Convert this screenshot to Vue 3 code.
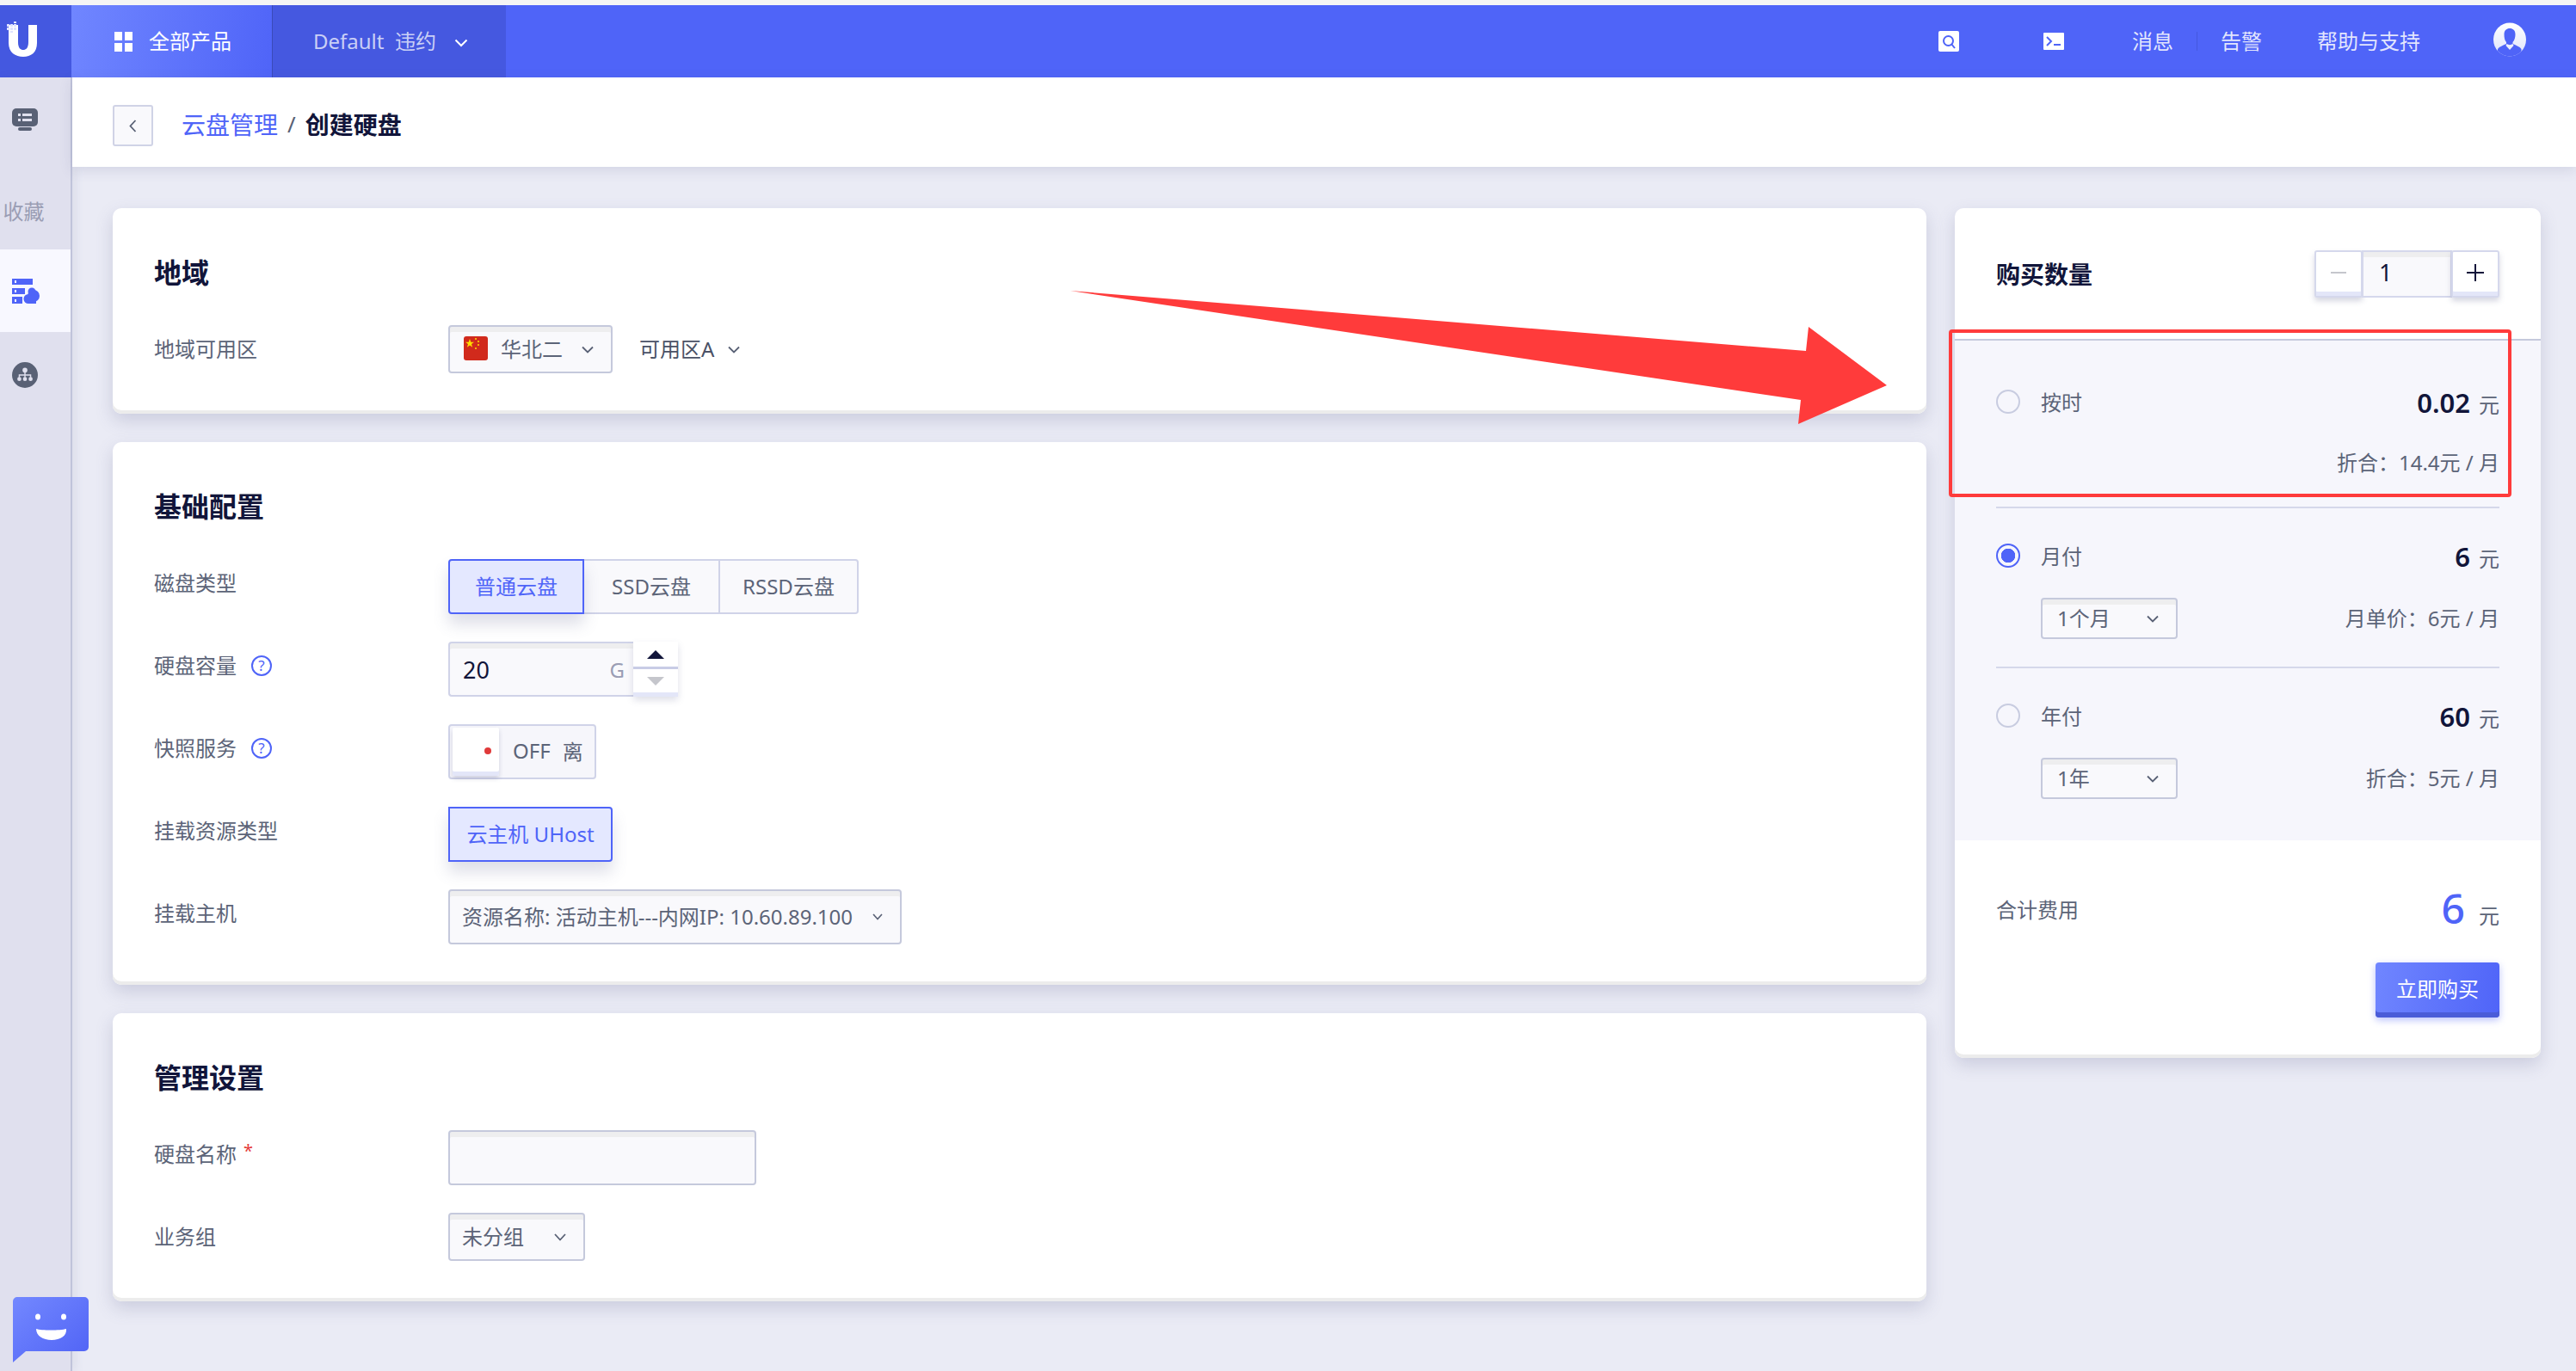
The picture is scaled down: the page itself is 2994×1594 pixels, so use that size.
<script setup>
const diskTypes = [
  { name: '普通云盘', w: 158, active: true },
  { name: 'SSD云盘', w: 158 },
  { name: 'RSSD云盘', w: 161 }
]
const rightNav = ['消息', '告警', '帮助与支持']
</script>

<template>
  <div class="page">
    <header class="topbar">
      <div class="logo">
        <svg width="83" height="84" viewBox="0 0 83 84">
          <path d="M10 29h11v20c0 7 3 9 6 9s6-2 6-9V29h10v21c0 11-7 16-16 16s-17-5-17-16z" fill="#fff" />
          <g fill="#dfe3ff">
            <rect x="8" y="28" width="3" height="3" /><rect x="12" y="28" width="3" height="3" /><rect x="16" y="28" width="3" height="3" />
            <rect x="8" y="32" width="3" height="3" /><rect x="12" y="32" width="3" height="3" /><rect x="16" y="32" width="3" height="3" />
            <rect x="12" y="36" width="3" height="2" /><rect x="16" y="25" width="3" height="2" />
          </g>
        </svg>
      </div>
      <div class="all-products">
        <span class="grid-icon"><i></i><i></i><i></i><i></i></span>
        <span class="lift">全部产品</span>
      </div>
      <div class="project">
        <span class="lift">Default&nbsp; 违约</span>
        <svg class="head-chev" width="16" height="10" viewBox="0 0 16 10"><path d="M1.500 1.500 8 8l6.500-6.500" fill="none" stroke="#fff" stroke-width="2" /></svg>
      </div>
      <div class="head-right">
        <svg class="tool" width="24" height="24" viewBox="0 0 24 24">
          <rect width="24" height="24" rx="2" fill="#fff" />
          <circle cx="11.500" cy="11.500" r="5.500" fill="none" stroke="#4f64f8" stroke-width="2" />
          <path d="m15 15 4 5" stroke="#4f64f8" stroke-width="2" />
        </svg>
        <svg class="tool tool-term" width="24" height="20" viewBox="0 0 24 20">
          <rect width="24" height="20" rx="1" fill="#fff" />
          <path d="m4 5 5 5-5 5" fill="none" stroke="#4f64f8" stroke-width="2" />
          <path d="M12 14h8" stroke="#4f64f8" stroke-width="2" />
        </svg>
        <span class="nav-msg lift">{{ rightNav[0] }}</span>
        <i class="nav-sep"></i>
        <span class="nav-alarm lift">{{ rightNav[1] }}</span>
        <span class="nav-help lift">{{ rightNav[2] }}</span>
        <svg class="avatar" width="38" height="40" viewBox="0 0 38 40">
          <defs>
            <clipPath id="av"><ellipse cx="19" cy="20" rx="19" ry="19.500" /></clipPath>
            <linearGradient id="avbg" x1="0" y1="0" x2="0" y2="1"><stop offset="0" stop-color="#fff" /><stop offset="1" stop-color="#dfe3fb" /></linearGradient>
          </defs>
          <ellipse cx="19" cy="20" rx="19" ry="19.500" fill="url(#avbg)" />
          <g clip-path="url(#av)" fill="#4f64f8">
            <path d="M12.500 14c0-5 3-7 6.500-7s6.500 2 6.500 7c0 3-1 7-3 9v2c4 2 8 3 10 6v9H5v-9c2-3 6-4 10-6v-2c-2-2-2.500-6-2.500-9z" />
          </g>
          <path d="M15.500 25c2 1.500 5 1.500 7 0l1 2-4.500 5-4.500-5z" fill="#eef0fd" />
        </svg>
      </div>
    </header>

    <div class="body">
      <aside class="sidebar">
        <div class="side-item first">
          <svg width="30" height="26" viewBox="0 0 30 26">
            <rect width="30" height="21" rx="5" fill="#596175" />
            <rect x="7" y="6" width="3" height="3" fill="#e0e0ee" /><rect x="12" y="6" width="11" height="3" fill="#e0e0ee" />
            <rect x="7" y="12" width="3" height="3" fill="#e0e0ee" /><rect x="12" y="12" width="11" height="3" fill="#e0e0ee" />
            <rect x="7" y="22" width="16" height="4" rx="2" fill="#596175" />
          </svg>
        </div>
        <div class="side-item fav"><span class="lift">收藏</span></div>
        <div class="side-item on">
          <svg width="32" height="29" viewBox="0 0 32 29">
            <g fill="#4f64f8">
              <rect x="0" y="0" width="24" height="7" /><rect x="0" y="11" width="15" height="7" /><rect x="0" y="21" width="12" height="8" />
              <circle cx="19" cy="23.500" r="5.500" /><circle cx="25" cy="20" r="7" /><circle cx="23" cy="15" r="4.500" />
              <rect x="19" y="23" width="9" height="6" />
            </g>
            <g fill="#f8f8ff"><rect x="3" y="2" width="2" height="3" /><rect x="3" y="13" width="2" height="3" /><rect x="3" y="24" width="2" height="3" /></g>
          </svg>
        </div>
        <div class="side-item">
          <svg width="30" height="30" viewBox="0 0 32 32">
            <circle cx="16" cy="16" r="16" fill="#596175" />
            <g fill="#e0e0ee"><circle cx="16" cy="10" r="3" /><circle cx="9" cy="21" r="2.500" /><circle cx="16" cy="21" r="2.500" /><circle cx="23" cy="21" r="2.500" /></g>
            <path d="M16 12v7M9 19v-3h14v3" fill="none" stroke="#e0e0ee" stroke-width="1.500" />
          </svg>
        </div>
      </aside>

      <main class="main">
        <div class="crumbs">
          <button class="back">
            <svg width="9" height="15" viewBox="0 0 9 15"><path d="M7.500 1 1.500 7.500l6 6.500" fill="none" stroke="#596175" stroke-width="1.800" /></svg>
          </button>
          <span class="crumb-link lift">云盘管理</span>
          <span class="crumb-sep lift">/</span>
          <strong class="crumb-now lift">创建硬盘</strong>
        </div>

        <div class="content">
          <div class="left-col">
            <section class="card">
              <h2>地域</h2>
              <div class="row">
                <label class="lab">地域可用区</label>
                <div class="sel region">
                  <svg class="flag" width="28" height="28" viewBox="0 0 28 28">
                    <rect width="28" height="28" rx="3" fill="#d12a1c" />
                    <path d="m7 3 1.300 3.700H12L9 9l1.100 3.700L7 10.500 3.900 12.700 5 9 2 6.700h3.700z" fill="#ffde00" />
                    <g fill="#ffde00"><circle cx="14" cy="3" r="1" /><circle cx="17" cy="6" r="1" /><circle cx="17" cy="10" r="1" /><circle cx="14" cy="14" r="1" /></g>
                  </svg>
                  <span class="sel-text lift">华北二</span>
                  <svg class="chev" width="14" height="9" viewBox="0 0 14 9"><path d="m1 1.500 6 6 6-6" fill="none" stroke="#596175" stroke-width="1.800" /></svg>
                </div>
                <div class="zone">
                  <span class="lift">可用区A</span>
                  <svg width="14" height="9" viewBox="0 0 14 9"><path d="m1 1.500 6 6 6-6" fill="none" stroke="#596175" stroke-width="1.800" /></svg>
                </div>
              </div>
            </section>

            <section class="card">
              <h2>基础配置</h2>
              <div class="row gap">
                <label class="lab">磁盘类型</label>
                <div class="seg">
                  <button v-for="t in diskTypes" :key="t.name" class="seg-btn" :class="{ active: t.active }" :style="{ width: t.w + 'px' }">{{ t.name }}</button>
                </div>
              </div>
              <div class="row gap">
                <label class="lab">硬盘容量<span class="help">?</span></label>
                <div class="size">
                  <div class="size-input"><span class="val">20</span><span class="unit">G</span></div>
                  <div class="spin">
                    <div class="spin-up"><i class="tri up"></i></div>
                    <div class="spin-down"><i class="tri down"></i></div>
                  </div>
                </div>
              </div>
              <div class="row gap">
                <label class="lab">快照服务<span class="help">?</span></label>
                <div class="toggle">
                  <div class="knob"><i></i></div>
                  <span class="off lift">OFF</span>
                  <span class="off-cn lift">离</span>
                </div>
              </div>
              <div class="row gap">
                <label class="lab">挂载资源类型</label>
                <button class="seg-btn active single">云主机 UHost</button>
              </div>
              <div class="row">
                <label class="lab">挂载主机</label>
                <div class="sel host">
                  <span class="sel-text lift">资源名称: 活动主机---内网IP: 10.60.89.100</span>
                  <svg width="12" height="8" viewBox="0 0 12 8"><path d="m1 1 5 5.500L11 1" fill="none" stroke="#596175" stroke-width="1.600" /></svg>
                </div>
              </div>
            </section>

            <section class="card">
              <h2>管理设置</h2>
              <div class="row gap">
                <label class="lab">硬盘名称<em>*</em></label>
                <input class="text-input" />
              </div>
              <div class="row">
                <label class="lab">业务组</label>
                <div class="sel group">
                  <span class="sel-text lift">未分组</span>
                  <svg width="14" height="9" viewBox="0 0 14 9"><path d="m1 1 6 6.500L13 1" fill="none" stroke="#596175" stroke-width="1.800" /></svg>
                </div>
              </div>
            </section>
          </div>

          <aside class="panel">
            <div class="panel-head">
              <h2 class="panel-title">购买数量</h2>
              <div class="stepper">
                <button class="step"><svg width="18" height="20" viewBox="0 0 18 20"><path d="M0 10h18" stroke="#c5c6cc" stroke-width="2" /></svg></button>
                <div class="step-val">1</div>
                <button class="step"><svg width="20" height="20" viewBox="0 0 20 20"><path d="M0 10h20M10 0v20" stroke="#11153a" stroke-width="2" /></svg></button>
              </div>
            </div>

            <div class="plans">
              <div class="plan hour">
                <div class="plan-top">
                  <span class="radio"></span>
                  <span class="plan-name lift">按时</span>
                  <span class="price"><b>0.02</b><small>元</small></span>
                </div>
                <div class="plan-sub end"><span class="lift">折合：14.4元 / 月</span></div>
              </div>
              <div class="plan">
                <div class="plan-top">
                  <span class="radio on"></span>
                  <span class="plan-name lift">月付</span>
                  <span class="price"><b>6</b><small>元</small></span>
                </div>
                <div class="plan-sub">
                  <div class="sel period"><span class="lift">1个月</span><svg width="14" height="9" viewBox="0 0 14 9"><path d="m1 1.500 6 6 6-6" fill="none" stroke="#596175" stroke-width="1.800" /></svg></div>
                  <span class="lift">月单价：6元 / 月</span>
                </div>
              </div>
              <div class="plan last">
                <div class="plan-top">
                  <span class="radio"></span>
                  <span class="plan-name lift">年付</span>
                  <span class="price"><b>60</b><small>元</small></span>
                </div>
                <div class="plan-sub">
                  <div class="sel period"><span class="lift">1年</span><svg width="14" height="9" viewBox="0 0 14 9"><path d="m1 1.500 6 6 6-6" fill="none" stroke="#596175" stroke-width="1.800" /></svg></div>
                  <span class="lift">折合：5元 / 月</span>
                </div>
              </div>
            </div>

            <div class="total">
              <div class="total-row">
                <span class="plan-name flat lift">合计费用</span>
                <span class="price"><b class="big">6</b><small>元</small></span>
              </div>
              <div class="buy-row"><button class="buy">立即购买</button></div>
            </div>
          </aside>
        </div>
      </main>
    </div>

    <div class="chat">
      <svg width="88" height="76" viewBox="0 0 88 76">
        <defs>
          <linearGradient id="cg" x1="0" y1="0" x2="1" y2="1"><stop offset="0" stop-color="#7388ff" /><stop offset="1" stop-color="#4f62f5" /></linearGradient>
        </defs>
        <path d="M5 0h78a5 5 0 0 1 5 5v53a5 5 0 0 1-5 5H15L0 76V5a5 5 0 0 1 5-5z" fill="url(#cg)" />
        <ellipse cx="29" cy="23" rx="3" ry="3.500" fill="#fff" />
        <ellipse cx="59" cy="23" rx="3" ry="3.500" fill="#fff" />
        <path d="M27 37c6 2 28 2 35 0 1 8-7 13-17 13s-18-5-18-13z" fill="#fff" />
      </svg>
    </div>

    <svg class="arrow" width="960" height="160" viewBox="0 0 960 160">
      <polygon points="4,4 859,74 862,46 953,114 850,159 853,131" fill="#ff3b3b" />
    </svg>
    <div class="red-box"></div>
  </div>
</template>

<style>
html, body { margin: 0; padding: 0; background: #f5f5f5; }
</style>

<style scoped>
.page {
  position: relative;
  width: 2994px;
  height: 1594px;
  overflow: hidden;
  padding-top: 6px;
  box-sizing: border-box;
  font-family: "Noto Sans", "Noto Sans CJK SC", sans-serif;
  font-size: 24px;
  color: #5c6478;
  background: #f5f5f5;
}
button { font-family: inherit; padding: 0; cursor: default; }
h2 { margin: 0; font-size: 32px; line-height: 40px; font-weight: 700; color: #11153a; }
.lift { padding-bottom: 4px; }

/* top bar */
.topbar { display: flex; height: 84px; background: #4f64f8; color: #fff; }
.logo { width: 83px; background: #4458e0; }
.logo svg { display: block; margin-top: -6px; }
.all-products {
  width: 233px; box-sizing: border-box; padding-left: 50px;
  display: flex; align-items: center; gap: 19px;
  background: linear-gradient(100deg, #7086ff, #4f64f8);
}
.grid-icon { display: grid; grid-template-columns: 9px 9px; grid-auto-rows: 10px; gap: 3px; }
.grid-icon i { background: #fff; }
.project {
  width: 272px; box-sizing: border-box; padding-left: 47px;
  display: flex; align-items: center; gap: 21px;
  background: #4558e0; border-left: 1px solid #3a4ab8;
  color: rgba(255, 255, 255, .72);
}
.head-chev { margin-top: 4px; }
.head-right { margin-left: auto; display: flex; align-items: center; padding-right: 58px; color: rgba(255, 255, 255, .85); }
.tool { display: block; }
.tool-term { margin-left: 98px; }
.nav-msg { margin-left: 79px; }
.nav-sep { width: 1px; height: 22px; background: #4458e0; margin-left: 27px; }
.nav-alarm { margin-left: 27px; }
.nav-help { margin-left: 64px; }
.avatar { margin-left: 85px; margin-top: -4px; }

/* sidebar */
.body { display: flex; height: 1504px; }
.sidebar {
  width: 82px; flex: none; background: #e0e0ee; border-right: 2px solid #c0c3da;
  position: relative; box-shadow: 4px 0 10px rgba(90, 95, 140, .1);
}
.side-item { height: 100px; box-sizing: border-box; padding-right: 24px; display: flex; align-items: center; justify-content: center; }
.side-item.first { height: 98px; }
.side-item.fav { height: 102px; padding: 14px 27px 0 0; color: #9a9db4; }
.side-item.on { height: 96px; background: #f8f8ff; padding-right: 22px; }

/* main */
.main { flex: 1; min-width: 0; background: #eaebf5; }
.crumbs {
  height: 104px; box-sizing: border-box; padding: 8px 0 0 47px;
  display: flex; align-items: center;
  background: #fff; box-shadow: 0 4px 14px rgba(90, 95, 140, .16);
  position: relative;
}
.back {
  width: 47px; height: 48px; box-sizing: border-box;
  border: 2px solid #d0d3e6; border-radius: 3px; background: #f9f9fc;
  display: flex; align-items: center; justify-content: center;
}
.crumb-link { margin-left: 33px; font-size: 28px; color: #4f64f8; }
.crumb-sep { margin: 0 11px; font-size: 26px; color: #596175; }
.crumb-now { font-size: 28px; font-weight: 700; color: #11153a; }

.content { display: flex; gap: 33px; padding: 48px 0 0 47px; }
.left-col { width: 2108px; display: flex; flex-direction: column; gap: 33px; }
.card {
  box-sizing: border-box;
  padding: 55px 49px 47px 48px;
  background: #fff; border-radius: 10px;
  box-shadow: inset 0 -4px 0 #ececec, 0 8px 20px rgba(90, 95, 140, .22);
}
.card h2 { margin-bottom: 41px; }
.row { display: flex; align-items: flex-start; }
.row.gap { margin-bottom: 32px; }
.lab { width: 342px; flex: none; line-height: 56px; display: flex; align-items: center; }
.lab em { color: #e5393a; font-style: normal; font-size: 20px; margin: -8px 0 0 8px; }
.help {
  width: 24px; height: 24px; box-sizing: border-box; margin-left: 17px;
  border: 2px solid #4f64f8; border-radius: 50%;
  color: #4f64f8; font-size: 17px; line-height: 20px; text-align: center;
}

.sel {
  box-sizing: border-box; display: flex; align-items: center;
  height: 56px; padding: 0 20px 0 14px;
  border: 2px solid #c5c9dc; border-radius: 4px; background: #f9f9fc;
  box-shadow: inset 0 6px 0 #eeeeef;
}
.region { width: 191px; padding-left: 16px; }
.flag { flex: none; margin-top: -3px; }
.region .sel-text { margin-left: 15px; }
.region .chev { margin-left: auto; }
.zone { margin-left: 31px; height: 56px; display: flex; align-items: center; gap: 16px; color: #4a5166; }
.host { width: 527px; height: 64px; justify-content: space-between; }
.group { width: 159px; justify-content: space-between; }
.period { width: 159px; height: 48px; justify-content: space-between; padding: 0 20px 0 17px; }

.seg { display: flex; }
.seg-btn {
  height: 64px; box-sizing: border-box; padding-bottom: 3px;
  border: 2px solid #d0d3e8; border-left-width: 0;
  background: #f9f9fc; color: #5c6478; font-size: 24px;
}
.seg-btn:first-child { border-left-width: 2px; border-radius: 4px 0 0 4px; }
.seg-btn:last-child { border-radius: 0 4px 4px 0; }
.seg-btn.active {
  border: 2px solid #4f64f8; background: #e4e8ff; color: #4f64f8;
  box-shadow: 0 12px 18px rgba(90, 95, 140, .2);
  position: relative;
}
.single { width: 191px; border-radius: 4px; }

.size { display: flex; height: 64px; }
.size-input {
  width: 215px; box-sizing: border-box; padding: 0 10px 0 15px;
  display: flex; align-items: center; justify-content: space-between;
  border: 2px solid #d0d3e8; border-right: 0; border-radius: 4px 0 0 4px;
  background: #f9f9fc; box-shadow: inset 0 6px 0 #eeeeef;
}
.val { color: #11153a; font-size: 27px; }
.unit { color: #9a9db4; }
.spin { width: 52px; display: flex; flex-direction: column; box-shadow: 0 4px 8px rgba(90, 95, 140, .2); }
.spin-up { height: 32px; box-sizing: border-box; background: #fff; border-bottom: 3px solid #c8cce6; display: flex; align-items: center; justify-content: center; }
.spin-down { height: 32px; background: #fff; box-shadow: inset 0 -5px 0 #e3e6f8; display: flex; align-items: center; justify-content: center; padding-bottom: 4px; box-sizing: border-box; }
.tri { width: 0; height: 0; border-left: 10px solid transparent; border-right: 10px solid transparent; }
.tri.up { border-bottom: 10px solid #11153a; }
.tri.down { border-top: 10px solid #c5c6cc; }

.toggle {
  width: 172px; height: 64px; box-sizing: border-box;
  display: flex; align-items: center;
  border: 2px solid #d0d3e8; border-radius: 4px; background: #f6f6fb;
  padding: 3px;
}
.knob {
  width: 54px; height: 56px; flex: none; box-sizing: border-box; position: relative;
  background: #fff; border-radius: 2px;
  box-shadow: inset 0 -5px 0 #e3e6f8, 0 3px 5px rgba(90, 95, 140, .25);
}
.knob i { position: absolute; left: 37px; top: 23px; width: 8px; height: 8px; border-radius: 50%; background: #e03a3a; }
.off { margin-left: 16px; }
.off-cn { margin-left: 14px; }

.text-input {
  width: 358px; height: 64px; box-sizing: border-box; display: block;
  border: 2px solid #c5c9dc; border-radius: 4px; background: #f9f9fc;
  box-shadow: inset 0 6px 0 #eeeeef; outline: none;
}

/* right panel */
.panel {
  width: 681px; height: 988px; overflow: hidden; flex: none;
  background: #fff; border-radius: 10px;
  box-shadow: inset 0 -4px 0 #ececec, 0 8px 20px rgba(90, 95, 140, .22);
}
.panel-head {
  height: 154px; box-sizing: border-box; padding: 49px 48px 0;
  display: flex; justify-content: space-between; align-items: flex-start;
  border-bottom: 2px solid #c5c9dc;
}
.panel-title { font-size: 28px; line-height: 56px; }
.stepper { display: flex; height: 55px; }
.step {
  width: 56px; height: 55px; box-sizing: border-box; padding-bottom: 3px;
  border: 2px solid #d5d8ec; border-radius: 3px; background: #fff;
  box-shadow: inset 0 -5px 0 #e3e6f8, 0 4px 6px rgba(90, 95, 140, .25);
  display: flex; align-items: center; justify-content: center;
}
.step-val {
  width: 105px; box-sizing: border-box; margin: 0 -1px; padding: 0 0 0 18px;
  border: 2px solid #d5d8ec; background: #f9f9fc;
  box-shadow: inset 0 6px 0 #eeeeef;
  color: #11153a; font-size: 27px; line-height: 48px;
}
.plans { background: #f6f6fc; padding: 0 48px; height: 581px; box-sizing: border-box; }
.plan { padding: 36px 0 32px; border-bottom: 2px solid #d5d8ea; }
.plan.hour { padding: 52px 0 27px; }
.plan.hour .plan-sub { margin-top: 26px; }
.plan.last { border-bottom: 0; }
.plan-top { display: flex; align-items: center; height: 40px; }
.radio { width: 28px; height: 28px; box-sizing: border-box; flex: none; border: 2px solid #c8cce0; border-radius: 50%; margin-top: -2px; position: relative; }
.radio.on { border-color: #4f64f8; background: radial-gradient(circle, #4f64f8 0 8px, transparent 8.500px); }
.plan-name { margin-left: 24px; }
.plan-name.flat { margin-left: 0; }
.price { margin-left: auto; display: flex; align-items: baseline; gap: 10px; }
.price b { font-size: 31px; font-weight: 600; color: #11153a; }
.price b.big { font-size: 48px; font-weight: 500; color: #4f64f8; margin-right: 6px; line-height: 40px; }
.price small { font-size: 24px; }
.plan-sub { margin-top: 28px; margin-left: 52px; height: 48px; display: flex; align-items: center; justify-content: space-between; }
.plan-sub.end { justify-content: flex-end; }
.total { padding: 61px 48px 47px; }
.total-row { display: flex; align-items: center; height: 40px; }
.buy-row { display: flex; justify-content: flex-end; margin-top: 41px; }
.buy {
  width: 144px; height: 64px; border: 0; border-radius: 4px; padding-bottom: 6px;
  background: linear-gradient(100deg, #7086ff, #4f64f8);
  box-shadow: inset 0 -6px 0 #4a5cd8, 0 3px 8px rgba(79, 100, 248, .4);
  color: #fff; font-size: 24px;
}

/* overlays */
.chat { position: absolute; left: 15px; top: 1508px; width: 88px; height: 76px; }
.chat svg { display: block; }
.arrow { position: absolute; left: 1240px; top: 334px; }
.red-box {
  position: absolute; left: 2265px; top: 383px; width: 654px; height: 195px;
  box-sizing: border-box; border: 4px solid #ff3b3b; border-radius: 4px;
}
</style>
